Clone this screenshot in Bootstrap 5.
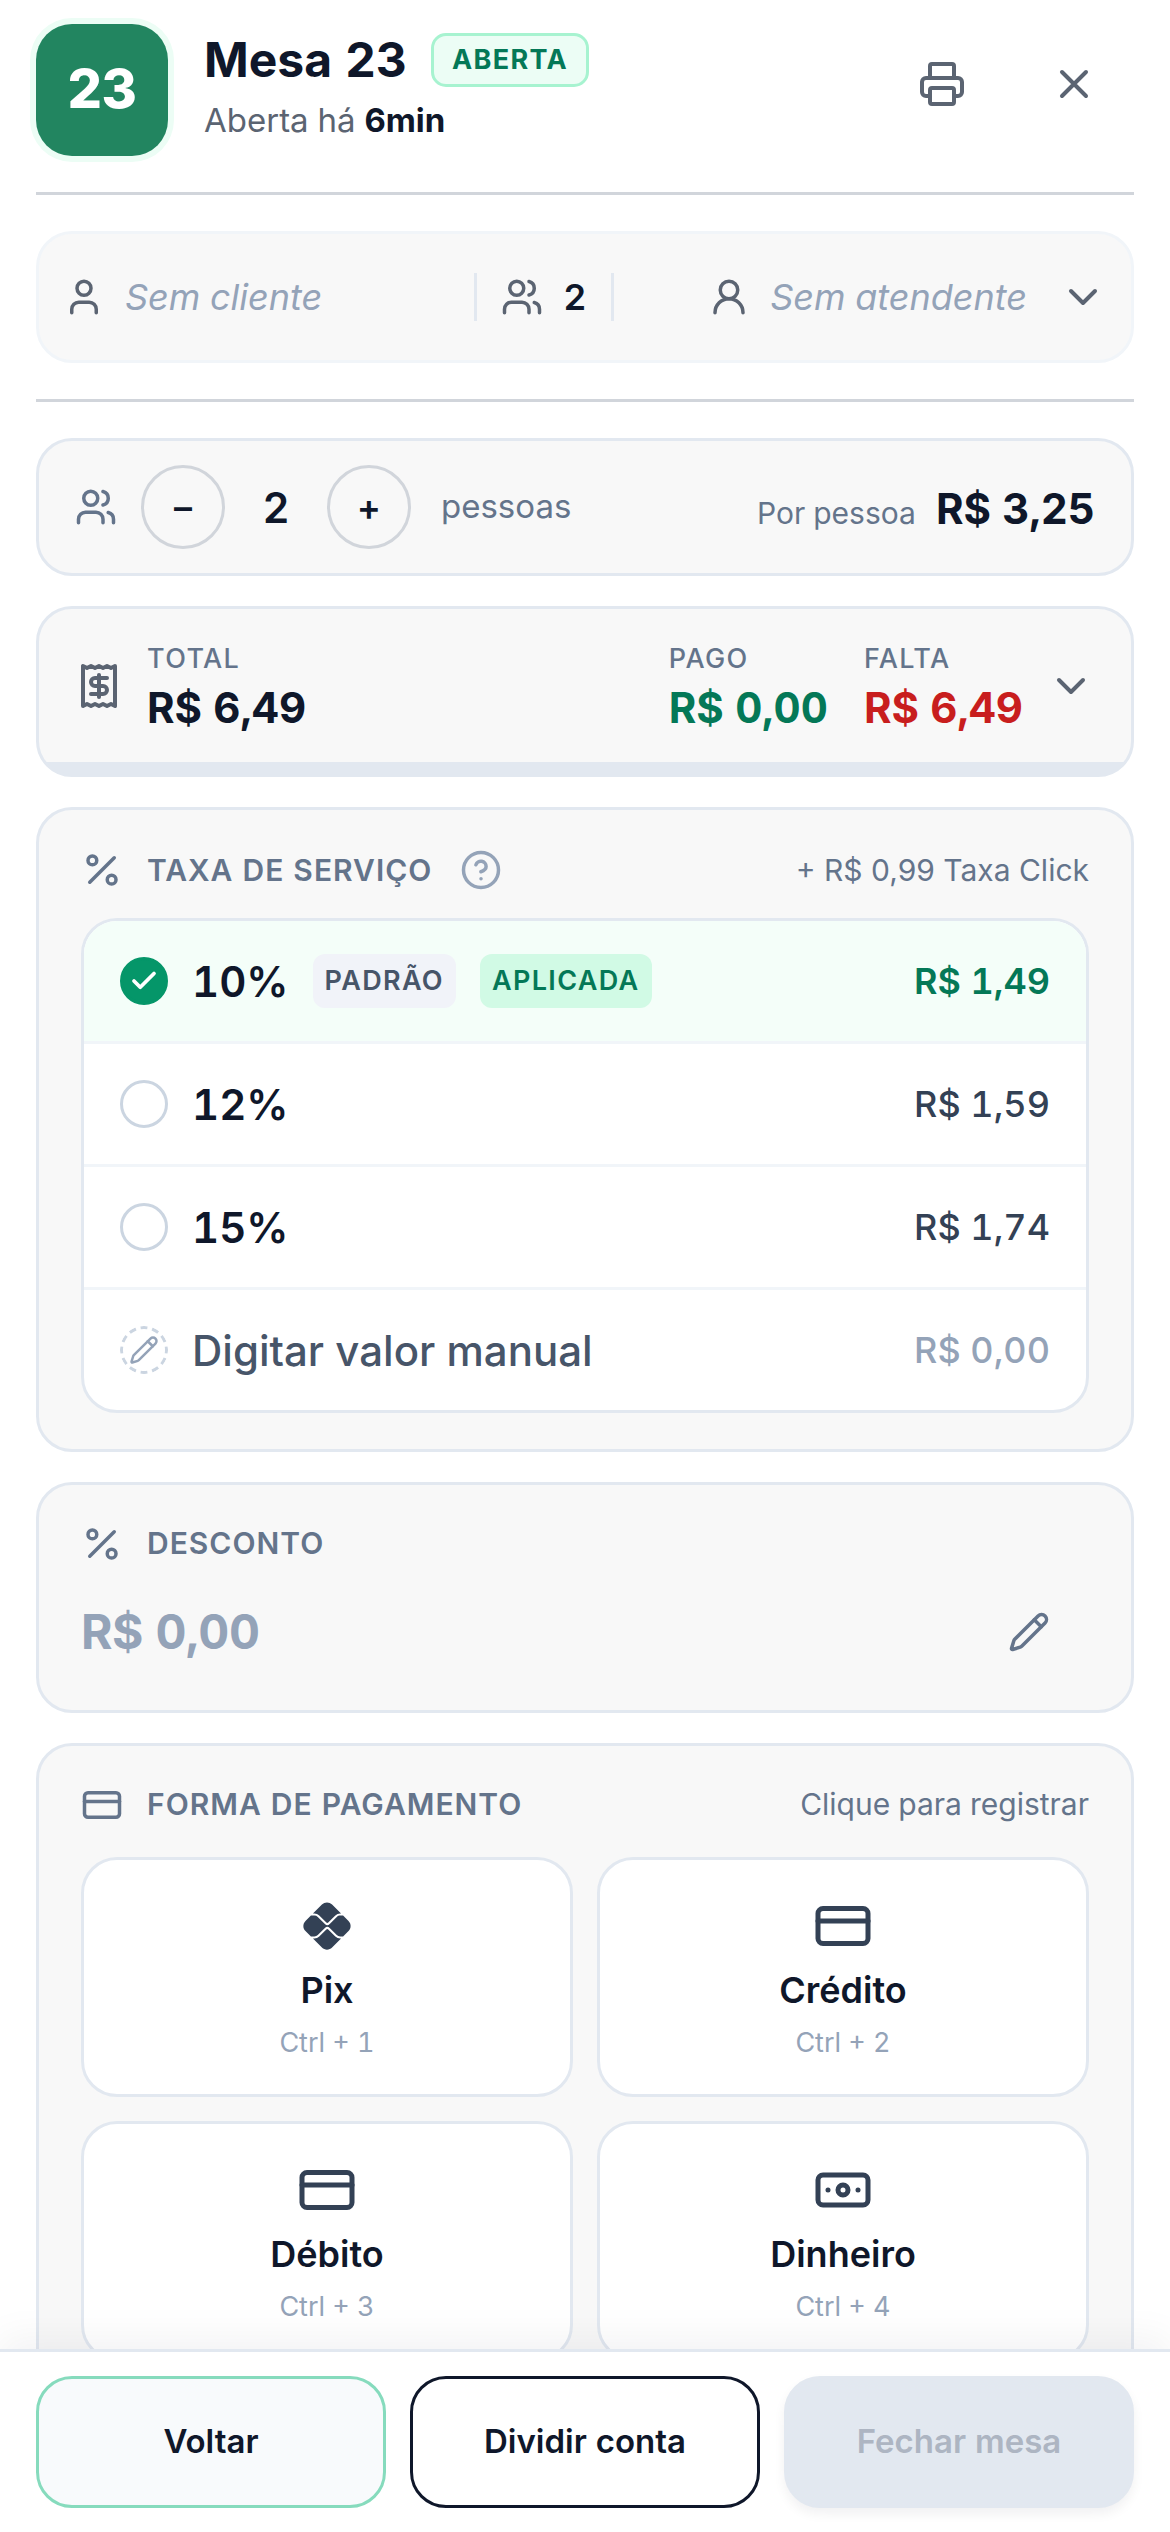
<!DOCTYPE html>
<html lang="pt-BR">
<head>
<meta charset="utf-8">
<meta name="viewport" content="width=device-width, initial-scale=1">
<title>Mesa 23</title>
<link href="https://cdn.jsdelivr.net/npm/bootstrap@5.3.0/dist/css/bootstrap.min.css" rel="stylesheet">
<style>
  :root { --ink:#0f172a; --slate:#64748b; --gray:#5b6472; --pale:#94a3b8; --line:#e2e8f0; --soft:#f1f5f9; --panel:#f8f8f8; --green:#047857; }
  body { font-family: Inter, "Liberation Sans", sans-serif; font-size:36px; line-height:1.5; color:var(--ink); font-variant-numeric: tabular-nums; }
  button { font-variant-numeric: inherit; }
  .ico { fill:none; stroke:currentColor; stroke-width:2; stroke-linecap:round; stroke-linejoin:round; flex:none; width:42px; height:42px; display:block; }
  .ico-48 { width:48px; height:48px; }
  .ico-60 { width:60px; height:60px; }
  .bare { background:none; border:0; padding:0; color:inherit; font:inherit; text-align:start; }
  .scroller { min-height:0; overflow-y:auto; scrollbar-width:none; }
  .page-pad { padding:24px 36px 0; }
  .rule { border-bottom:3px solid #d1d5db; }
  .stack { gap:30px; padding:36px 0 30px; }
  .gap-xs { gap:12px; } .gap-s { gap:20px; } .gap-m { gap:24px; } .gap-l { gap:36px; }
  .ink { color:var(--ink); } .slate { color:var(--slate); } .green { color:var(--green); } .red { color:#c81e1e; } .gray { color:var(--gray); } .pale { color:var(--pale); }

  .table-tile { width:132px; height:132px; border-radius:36px; background:#228560; color:#fff; font-size:54px; font-weight:800; padding-bottom:4px; box-shadow:0 0 0 6px #ecfdf5; }
  .head { padding-bottom:36px; gap:36px; }
  .head-title { font-size:48px; line-height:60px; font-weight:700; margin:0; }
  .head-sub { font-size:33px; line-height:60px; color:var(--gray); margin:0; }
  .tag { font-size:27px; line-height:54px; letter-spacing:.05em; font-weight:600; border-radius:12px; padding:0 12px; height:54px; }
  .tag-open { background:#ecfdf5; border:3px solid #a7f3d0; color:var(--green); line-height:48px; padding:0 18px; font-weight:700; border-radius:15px; }
  .tag-std { background:#f1f3f9; color:#475569; }
  .tag-on { background:#d1fae5; color:var(--green); }
  .icon-btn { width:120px; height:120px; color:var(--gray); }

  .info-wrap { padding:36px 0; }
  .panel { background:var(--panel); border:3px solid var(--line); border-radius:36px; }
  .info { border-color:var(--soft); height:132px; padding:0 24px; color:var(--gray); }
  .info-client { flex:5 1 0; }
  .info-waiter { flex:6 1 0; }
  .info-waiter .ghost { padding-right:12px; }
  .info-mid { border:solid var(--line); border-width:0 3px; height:48px; padding:0 24px; }
  .ghost { color:var(--pale); font-style:italic; }

  .people { height:138px; padding:0 36px; }
  .step { width:84px; height:84px; border:3px solid #d1d5db; border-radius:50%; background:none; color:var(--ink); font-size:36px; line-height:1; font-weight:600; padding:0; }
  .step-n { width:102px; font-size:42px; font-weight:600; }
  .money { font-size:42px; font-weight:700; line-height:54px; }
  .people-label { font-size:33px; padding-left:30px; }
  .t30 { font-size:30px; line-height:45px; }

  .panel.totals { height:171px; padding:0 36px 12px; background:linear-gradient(to top, var(--line) 12px, var(--panel) 12px); }
  .kicker { font-size:27px; line-height:45px; font-weight:500; letter-spacing:.05em; color:var(--slate); }

  .section { padding:36px 42px; }
  .section-title { font-size:30px; line-height:45px; font-weight:600; letter-spacing:1px; color:var(--slate); margin:0; }
  .fee-head { height:48px; }
  .fee-extra { font-variant-numeric:normal; }
  .fees { border:3px solid var(--line); border-radius:36px; background:#fff; overflow:hidden; margin-top:24px; }
  .fee { padding:0 36px; height:120px; box-sizing:content-box; cursor:pointer; }
  .fee + .fee { border-top:3px solid var(--soft); }
  .fee-on { background:#f4fef9; }
  .fee-name { font-size:42px; font-weight:600; }
  .fee-name-manual { font-weight:500; color:#475569; }
  .fee-value { font-size:36px; font-weight:500; color:#334155; }
  .fee-on .fee-value { font-weight:600; color:var(--green); }
  .fee-value.pale { color:var(--pale); }
  .fee .form-check-input { width:48px; height:48px; margin:0; border:3px solid #cbd5e1; background-color:#fff; background-size:30px; background-position:center; background-repeat:no-repeat; flex:none; }
  .fee .form-check-input:checked { background-color:#059669; border-color:#059669; background-image:url("data:image/svg+xml,%3Csvg xmlns='http://www.w3.org/2000/svg' viewBox='0 0 24 24' fill='none' stroke='white' stroke-width='3' stroke-linecap='round' stroke-linejoin='round'%3E%3Cpath d='M20 6 9 17l-5-5'/%3E%3C/svg%3E"); }
  .fee .pick-manual { border:0; background-size:48px; background-image:url("data:image/svg+xml,%3Csvg xmlns='http://www.w3.org/2000/svg' viewBox='0 0 48 48' fill='none' stroke-linecap='round' stroke-linejoin='round'%3E%3Ccircle cx='24' cy='24' r='22.5' stroke='%23cbd5e1' stroke-width='3' stroke-linecap='butt' pathLength='120' stroke-dasharray='6 4' stroke-dashoffset='3'/%3E%3Cg transform='translate(9 9) scale(1.25)' stroke='%2394a3b8' stroke-width='2'%3E%3Cpath d='M21.174 6.812a1 1 0 0 0-3.986-3.987L3.842 16.174a2 2 0 0 0-.5.83l-1.321 4.352a.5.5 0 0 0 .623.622l4.353-1.32a2 2 0 0 0 .83-.497z'/%3E%3Cpath d='m15 5 4 4'/%3E%3C/g%3E%3C/svg%3E"); }

  .discount { height:84px; margin-top:24px; }
  .discount-value { font-size:48px; font-weight:700; letter-spacing:-.01em; color:var(--pale); }
  .discount-edit { width:120px; height:84px; color:var(--slate); }

  .pays { display:grid; grid-template-columns:1fr 1fr; gap:24px; margin-top:30px; }
  .pay { background:#fff; border:3px solid var(--line); border-radius:36px; padding:36px 12px 33px; color:#334155; gap:12px; }
  .pay-name { font-size:36px; line-height:45px; font-weight:600; color:var(--ink); }
  .pay-key { font-size:27px; line-height:36px; color:var(--pale); }
  .pix { fill:currentColor; stroke:none; padding:3px; }

  .foot { border-top:3px solid var(--line); background:#fff; padding:24px 36px; gap:24px; box-shadow:0 -12px 36px rgba(15,23,42,.05); }
  .foot .btn { height:132px; border:3px solid var(--ink); border-radius:36px; font-size:33px; font-weight:600; color:var(--ink); flex:1 1 0; padding:0; }
  .foot .btn-back { background:#f8fafc; border-color:#86dbbd; }
  .foot .btn-close-table:disabled { background:var(--line); border-color:var(--line); color:#adb5c2; opacity:1; box-shadow:0 6px 12px rgba(15,23,42,.06); }
</style>
</head>
<body class="vh-100 d-flex flex-column bg-white">
<svg width="0" height="0" class="d-none" aria-hidden="true">
  <symbol id="users" viewBox="0 0 24 24"><path d="M16 21v-2a4 4 0 0 0-4-4H6a4 4 0 0 0-4 4v2"/><circle cx="9" cy="7" r="4"/><path d="M22 21v-2a4 4 0 0 0-3-3.87M16 3.13a4 4 0 0 1 0 7.75"/></symbol>
  <symbol id="chevron" viewBox="0 0 24 24"><path d="m6 9 6 6 6-6"/></symbol>
  <symbol id="percent" viewBox="0 0 24 24"><path d="M19 5 5 19"/><circle cx="6.5" cy="6.5" r="2.5"/><circle cx="17.5" cy="17.5" r="2.5"/></symbol>
  <symbol id="card-icon" viewBox="0 0 24 24"><rect x="2" y="5" width="20" height="14" rx="2"/><path d="M2 10h20"/></symbol>
</svg>

<main class="scroller flex-grow-1">
  <div class="page-pad">
    <header class="head rule d-flex align-items-start">
      <div class="table-tile d-flex align-items-center justify-content-center flex-shrink-0">23</div>
      <div class="flex-grow-1 align-self-center">
        <div class="d-flex align-items-center gap-m">
          <h1 class="head-title">Mesa 23</h1>
          <span class="tag tag-open">ABERTA</span>
        </div>
        <p class="head-sub">Aberta há <span class="fw-bold ink">6min</span></p>
      </div>
      <div class="d-flex gap-xs">
        <button class="bare icon-btn d-flex align-items-center justify-content-center" aria-label="Imprimir">
          <svg class="ico ico-48" viewBox="0 0 24 24"><path d="M6 18H4a2 2 0 0 1-2-2v-5a2 2 0 0 1 2-2h16a2 2 0 0 1 2 2v5a2 2 0 0 1-2 2h-2"/><path d="M6 9V3a1 1 0 0 1 1-1h10a1 1 0 0 1 1 1v6"/><rect x="6" y="14" width="12" height="8" rx="1"/></svg>
        </button>
        <button class="bare icon-btn d-flex align-items-center justify-content-center" aria-label="Fechar">
          <svg class="ico ico-48" viewBox="0 0 24 24"><path d="M18 6 6 18M6 6l12 12"/></svg>
        </button>
      </div>
    </header>

    <div class="info-wrap rule">
      <div class="panel info d-flex align-items-center">
        <button class="bare info-client d-flex align-items-center gap-s">
          <svg class="ico" viewBox="0 0 24 24"><path d="M19 21v-2a4 4 0 0 0-4-4H9a4 4 0 0 0-4 4v2"/><circle cx="12" cy="7" r="4"/></svg>
          <span class="ghost">Sem cliente</span>
        </button>
        <div class="info-mid d-flex align-items-center gap-s">
          <svg class="ico"><use href="#users"/></svg>
          <span class="fw-semibold ink">2</span>
        </div>
        <button class="bare info-waiter d-flex align-items-center justify-content-end gap-s">
          <svg class="ico" viewBox="0 0 24 24"><circle cx="12" cy="8" r="5"/><path d="M20 21a8 8 0 0 0-16 0"/></svg>
          <span class="ghost">Sem atendente</span>
          <svg class="ico ico-48"><use href="#chevron"/></svg>
        </button>
      </div>
    </div>

    <div class="stack d-flex flex-column">
      <section class="panel people d-flex align-items-center">
        <svg class="ico slate me-4"><use href="#users"/></svg>
        <button class="step" aria-label="Menos uma pessoa">–</button>
        <span class="step-n text-center">2</span>
        <button class="step" aria-label="Mais uma pessoa">+</button>
        <span class="slate people-label">pessoas</span>
        <div class="ms-auto d-flex align-items-baseline gap-s pt-1">
          <span class="slate t30">Por pessoa</span>
          <span class="money">R$ 3,25</span>
        </div>
      </section>

      <button class="bare panel totals d-flex align-items-center gap-m w-100">
        <svg class="ico ico-48 gray" viewBox="0 0 24 24"><path d="M4 2v20l2-1 2 1 2-1 2 1 2-1 2 1 2-1 2 1V2l-2 1-2-1-2 1-2-1-2 1-2-1-2 1Z"/><path d="M16 8h-6a2 2 0 1 0 0 4h4a2 2 0 1 1 0 4H8"/><path d="M12 17.5v-11"/></svg>
        <span class="d-flex flex-column flex-grow-1"><span class="kicker">TOTAL</span><span class="money">R$ 6,49</span></span>
        <span class="d-flex gap-l">
          <span class="d-flex flex-column"><span class="kicker">PAGO</span><span class="money green">R$ 0,00</span></span>
          <span class="d-flex flex-column"><span class="kicker">FALTA</span><span class="money red">R$ 6,49</span></span>
        </span>
        <svg class="ico ico-48 gray"><use href="#chevron"/></svg>
      </button>

      <section class="panel section">
        <div class="fee-head d-flex align-items-center gap-m">
          <svg class="ico slate"><use href="#percent"/></svg>
          <h2 class="section-title">TAXA DE SERVIÇO</h2>
          <button class="bare pale ms-1" aria-label="Ajuda">
            <svg class="ico" viewBox="0 0 24 24"><circle cx="12" cy="12" r="10"/><path d="M9.09 9a3 3 0 0 1 5.83 1c0 2-3 3-3 3"/><path d="M12 17h.01"/></svg>
          </button>
          <span class="slate t30 fee-extra ms-auto">+ R$ 0,99 Taxa Click</span>
        </div>
        <div class="fees">
          <label class="fee fee-on d-flex align-items-center gap-m">
            <input class="form-check-input" type="radio" name="fee" checked>
            <span class="fee-name">10%</span>
            <span class="tag tag-std">PADRÃO</span>
            <span class="tag tag-on">APLICADA</span>
            <span class="fee-value ms-auto">R$ 1,49</span>
          </label>
          <label class="fee d-flex align-items-center gap-m">
            <input class="form-check-input" type="radio" name="fee">
            <span class="fee-name">12%</span>
            <span class="fee-value ms-auto">R$ 1,59</span>
          </label>
          <label class="fee d-flex align-items-center gap-m">
            <input class="form-check-input" type="radio" name="fee">
            <span class="fee-name">15%</span>
            <span class="fee-value ms-auto">R$ 1,74</span>
          </label>
          <label class="fee d-flex align-items-center gap-m">
            <input class="form-check-input pick-manual" type="radio" name="fee">
            <span class="fee-name fee-name-manual">Digitar valor manual</span>
            <span class="fee-value pale ms-auto">R$ 0,00</span>
          </label>
        </div>
      </section>

      <section class="panel section">
        <div class="d-flex align-items-center gap-m">
          <svg class="ico slate"><use href="#percent"/></svg>
          <h2 class="section-title">DESCONTO</h2>
        </div>
        <div class="discount d-flex align-items-center justify-content-between">
          <span class="discount-value">R$ 0,00</span>
          <button class="bare discount-edit d-flex align-items-center justify-content-center" aria-label="Editar desconto">
            <svg class="ico" viewBox="0 0 24 24"><path d="M21.174 6.812a1 1 0 0 0-3.986-3.987L3.842 16.174a2 2 0 0 0-.5.83l-1.321 4.352a.5.5 0 0 0 .623.622l4.353-1.32a2 2 0 0 0 .83-.497z"/><path d="m15 5 4 4"/></svg>
          </button>
        </div>
      </section>

      <section class="panel section">
        <div class="d-flex align-items-center gap-m">
          <svg class="ico slate"><use href="#card-icon"/></svg>
          <h2 class="section-title">FORMA DE PAGAMENTO</h2>
          <span class="slate t30 ms-auto">Clique para registrar</span>
        </div>
        <div class="pays">
          <button class="pay d-flex flex-column align-items-center">
            <svg class="ico ico-60 pix" viewBox="0 0 16 16"><path d="M11.917 11.71a2.046 2.046 0 0 1-1.454-.602l-2.1-2.1a.4.4 0 0 0-.551 0l-2.108 2.108a2.044 2.044 0 0 1-1.454.602h-.414l2.66 2.66c.83.83 2.177.83 3.007 0l2.667-2.668h-.253zM4.25 4.282c.55 0 1.066.214 1.454.602l2.108 2.108a.39.39 0 0 0 .552 0l2.1-2.1a2.044 2.044 0 0 1 1.453-.602h.253L9.503 1.623a2.127 2.127 0 0 0-3.007 0l-2.66 2.66h.414z"/><path d="m14.377 6.496-1.612-1.612a.307.307 0 0 1-.114.023h-.733c-.379 0-.75.154-1.017.422l-2.1 2.1a1.005 1.005 0 0 1-1.425 0L5.268 5.32a1.448 1.448 0 0 0-1.018-.422h-.9a.306.306 0 0 1-.109-.021L1.623 6.496c-.83.83-.83 2.177 0 3.008l1.618 1.618a.305.305 0 0 1 .108-.022h.901c.38 0 .75-.153 1.018-.421L7.375 8.57a1.034 1.034 0 0 1 1.426 0l2.1 2.1c.267.268.638.421 1.017.421h.733c.04 0 .079.01.114.024l1.612-1.612c.83-.83.83-2.178 0-3.008z"/></svg>
            <span class="pay-name">Pix</span><span class="pay-key">Ctrl + 1</span>
          </button>
          <button class="pay d-flex flex-column align-items-center">
            <svg class="ico ico-60"><use href="#card-icon"/></svg>
            <span class="pay-name">Crédito</span><span class="pay-key">Ctrl + 2</span>
          </button>
          <button class="pay d-flex flex-column align-items-center">
            <svg class="ico ico-60"><use href="#card-icon"/></svg>
            <span class="pay-name">Débito</span><span class="pay-key">Ctrl + 3</span>
          </button>
          <button class="pay d-flex flex-column align-items-center">
            <svg class="ico ico-60" viewBox="0 0 24 24"><rect x="2" y="6" width="20" height="12" rx="2"/><circle cx="12" cy="12" r="2"/><path d="M6 12h.01M18 12h.01"/></svg>
            <span class="pay-name">Dinheiro</span><span class="pay-key">Ctrl + 4</span>
          </button>
        </div>
      </section>
    </div>
  </div>
</main>

<footer class="foot d-flex position-relative">
  <button class="btn btn-back">Voltar</button>
  <button class="btn">Dividir conta</button>
  <button class="btn btn-close-table" disabled>Fechar mesa</button>
</footer>
<script src="https://cdn.jsdelivr.net/npm/bootstrap@5.3.0/dist/js/bootstrap.bundle.min.js"></script>
</body>
</html>
